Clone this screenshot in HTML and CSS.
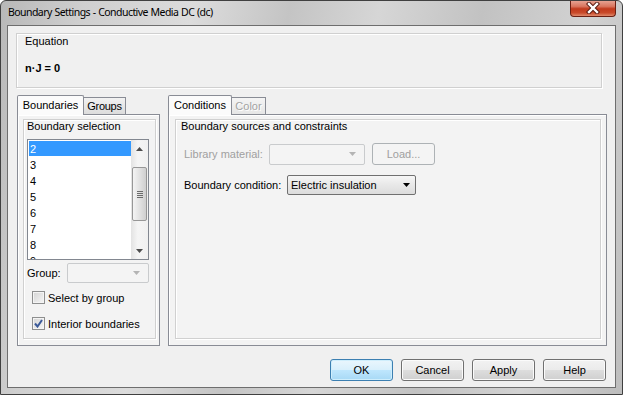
FILE: index.html
```html
<!DOCTYPE html>
<html lang="en">
<head>
    <meta charset="UTF-8">
    <title>Boundary Settings - Conductive Media DC (dc)</title>
    <link rel="stylesheet" href="styles.css">
</head>
<body>
    <div class="window">
        <div class="titlebar">
            <span class="title">Boundary Settings - Conductive Media DC (dc)</span>
            <div class="close">
                <svg width="14" height="12" viewBox="0 0 14 12">
                    <path d="M3 2 L11 10 M11 2 L3 10" stroke="#5a1a10" stroke-width="4.4" stroke-linecap="square"/>
                    <path d="M3 2 L11 10 M11 2 L3 10" stroke="#ffffff" stroke-width="2.4" stroke-linecap="square"/>
                </svg>
            </div>
        </div>

        <div class="client">
            <div class="group equation">
                <div class="group-title">Equation</div>
                <div class="formula">n·J = 0</div>
            </div>

            <div class="panes">
                <div class="tabpane pane-left">
                    <div class="tabstrip">
                        <span class="tab active tab-boundaries">Boundaries</span>
                        <span class="tab tab-groups">Groups</span>
                    </div>
                    <div class="tabbody">
                        <div class="group sel-group">
                            <div class="group-title">Boundary selection</div>

                            <div class="listbox">
                                <ul class="items">
                                    <li class="selected">2</li>
                                    <li>3</li>
                                    <li>4</li>
                                    <li>5</li>
                                    <li>6</li>
                                    <li>7</li>
                                    <li>8</li>
                                    <li>9</li>
                                </ul>
                                <div class="vscroll">
                                    <div class="sb-btn">
                                        <svg width="7" height="4" viewBox="0 0 7 4"><path d="M0 4 L3.5 0 L7 4 Z" fill="#4d4d4d"/></svg>
                                    </div>
                                    <div class="sb-thumb">
                                        <span></span><span></span><span></span><span></span>
                                    </div>
                                    <div class="sb-fill"></div>
                                    <div class="sb-btn">
                                        <svg width="7" height="4" viewBox="0 0 7 4"><path d="M0 0 L7 0 L3.5 4 Z" fill="#4d4d4d"/></svg>
                                    </div>
                                </div>
                            </div>

                            <div class="field-row group-row">
                                <span class="field-label">Group:</span>
                                <div class="combo disabled group-combo">
                                    <span class="combo-text"></span>
                                    <svg width="7" height="4" viewBox="0 0 7 4"><path d="M0 0 L7 0 L3.5 4 Z" fill="#b4b4b4"/></svg>
                                </div>
                            </div>

                            <label class="check">
                                <span class="box"></span>
                                Select by group
                            </label>
                            <label class="check">
                                <span class="box">
                                    <svg width="9" height="9" viewBox="0 0 9 9"><path d="M1 4.5 L3.5 7.5 L8 1" fill="none" stroke="#3b5a99" stroke-width="2"/></svg>
                                </span>
                                Interior boundaries
                            </label>
                        </div>
                    </div>
                </div>

                <div class="tabpane pane-right">
                    <div class="tabstrip">
                        <span class="tab active tab-conditions">Conditions</span>
                        <span class="tab disabled tab-color">Color</span>
                    </div>
                    <div class="tabbody">
                        <div class="group cond-group">
                            <div class="group-title">Boundary sources and constraints</div>

                            <div class="field-row lib-row">
                                <span class="field-label disabled-text">Library material:</span>
                                <div class="combo disabled lib-combo">
                                    <span class="combo-text"></span>
                                    <svg width="7" height="4" viewBox="0 0 7 4"><path d="M0 0 L7 0 L3.5 4 Z" fill="#b4b4b4"/></svg>
                                </div>
                                <button class="btn disabled load-btn">Load...</button>
                            </div>

                            <div class="field-row bc-row">
                                <span class="field-label">Boundary condition:</span>
                                <div class="combo bc-combo">
                                    <span class="combo-text">Electric insulation</span>
                                    <svg width="7" height="4" viewBox="0 0 7 4"><path d="M0 0 L7 0 L3.5 4 Z" fill="#000"/></svg>
                                </div>
                            </div>
                        </div>
                    </div>
                </div>
            </div>

            <div class="buttons">
                <button class="btn default">OK</button>
                <button class="btn">Cancel</button>
                <button class="btn">Apply</button>
                <button class="btn">Help</button>
            </div>
        </div>
    </div>
</body>
</html>
```

FILE: styles.css
```css
body
{
    margin: 0;
    font-family: "Liberation Sans", Arial, sans-serif;
    font-size: 11px;
    color: #000;
}

.window
{
    width: 623px;
    height: 395px;
    box-sizing: border-box;
    border: 1px solid #404040;
    border-radius: 6px 6px 0 0;
    background: linear-gradient(100deg, #b8b8b8 0%, #cfcfcf 12%, #dcdcdc 28%, #c4c4c4 42%, #d6d6d6 55%, #c2c2c2 70%, #d2d2d2 85%, #bdbdbd 100%);
    display: flex;
    flex-direction: column;
    overflow: hidden;
}

.titlebar
{
    height: 24px;
    flex-shrink: 0;
    display: flex;
    align-items: flex-start;
    padding-left: 7px;
}

.title
{
    font-family: "Noto Sans", "Open Sans", sans-serif;
    font-size: 10.5px;
    letter-spacing: -0.55px;
    word-spacing: 0.5px;
    margin-top: 4px;
    color: #000;
}

.close
{
    margin-left: auto;
    margin-right: 6px;
    margin-top: -1px;
    width: 46px;
    height: 17px;
    box-sizing: border-box;
    border: 1px solid #6b2013;
    border-top: none;
    border-radius: 0 0 4px 4px;
    background: linear-gradient(#e9a99a 0%, #d9765f 40%, #c13a1d 55%, #c94a2a 80%, #e08a6c 100%);
    display: flex;
    align-items: center;
    justify-content: center;
}

.client
{
    flex: 1;
    margin: 0 6px 6px;
    border: 1px solid #6e6e6e;
    background: #f0f0f0;
    padding: 7px 0 0 8px;
    display: flex;
    flex-direction: column;
}

/* group boxes */

.group
{
    box-sizing: border-box;
    border: 1px solid #d0d0d0;
    box-shadow: inset 1px 1px 0 #ffffff, 1px 1px 0 #ffffff;
}

.group-title
{
    line-height: 13px;
}

.equation
{
    width: 586px;
    height: 55px;
    padding: 1px 8px 0;
}

.formula
{
    margin-top: 14px;
    font-weight: bold;
    line-height: 13px;
}

/* tab panes */

.panes
{
    display: flex;
    gap: 8px;
    margin-top: 7px;
    margin-left: 1px;
    height: 251px;
}

.tabpane
{
    display: flex;
    flex-direction: column;
}

.pane-left
{
    width: 143px;
}

.pane-right
{
    width: 439px;
}

.tabstrip
{
    height: 19px;
    display: flex;
    align-items: flex-end;
    position: relative;
    z-index: 1;
}

.tab
{
    box-sizing: border-box;
    height: 17px;
    text-align: center;
    line-height: 16px;
    border: 1px solid #898c95;
    border-bottom: none;
    border-left: none;
    background: linear-gradient(#f2f2f2, #dcdcdc);
}

.tab.active
{
    height: 20px;
    margin-bottom: -1px;
    padding-top: 1px;
    border-left: 1px solid #898c95;
    border-radius: 2px 2px 0 0;
    background: #fbfbfb;
}

.tab.disabled
{
    color: #a3a3a3;
    text-shadow: 1px 1px 0 #ffffff;
    background: linear-gradient(#f4f4f4, #e6e6e6);
}

.tab-boundaries
{
    width: 67px;
}

.tab-groups
{
    width: 42px;
    letter-spacing: -0.3px;
}

.tab-conditions
{
    width: 64px;
}

.tab-color
{
    width: 34px;
}

.tabbody
{
    flex: 1;
    box-sizing: border-box;
    border: 1px solid #898c95;
    background: #f3f3f3;
    box-shadow: inset 1px 1px 0 #ffffff;
    padding: 4px 3px 6px 5px;
    display: flex;
}

.pane-right .tabbody
{
    padding: 4px 5px 6px 6px;
}

.sel-group,
.cond-group
{
    flex: 1;
    padding-left: 3px;
}

.cond-group
{
    padding-left: 5px;
}

/* list box */

.listbox
{
    margin-top: 6px;
    width: 122px;
    height: 121px;
    box-sizing: border-box;
    border: 1px solid #828790;
    background: #ffffff;
    display: flex;
    overflow: hidden;
}

.items
{
    flex: 1;
    list-style: none;
    margin: 0;
    padding: 1px 0 0 1px;
}

.items li
{
    height: 16px;
    line-height: 16px;
    padding-left: 1px;
}

.items li.selected
{
    background: #3399ff;
    color: #ffffff;
    height: 15px;
    margin-bottom: 1px;
}

.vscroll
{
    width: 17px;
    display: flex;
    flex-direction: column;
    background: linear-gradient(to right, #e3e3e3, #f5f5f5 40%, #f0f0f0);
}

.sb-btn
{
    height: 17px;
    display: flex;
    align-items: center;
    justify-content: center;
}

.sb-thumb
{
    margin: 10px 1px 0;
    height: 54px;
    box-sizing: border-box;
    border: 1px solid #979797;
    border-radius: 2px;
    background: linear-gradient(to right, #f4f4f4, #e2e2e2 50%, #cfcfcf);
    display: flex;
    flex-direction: column;
    align-items: center;
    justify-content: center;
    gap: 1px;
}

.sb-thumb span
{
    width: 6px;
    height: 1px;
    background: #6b6b6b;
}

.sb-fill
{
    flex: 1;
}

/* fields */

.field-row
{
    display: flex;
    align-items: center;
}

.group-row
{
    margin-top: 3px;
}

.group-row .field-label
{
    width: 40px;
}

.combo
{
    box-sizing: border-box;
    display: flex;
    align-items: center;
    border: 1px solid #707070;
    border-radius: 2px;
    background: linear-gradient(#f6f6f6, #e8e8e8 50%, #dcdcdc);
    padding: 0 8px 0 3px;
}

.combo-text
{
    flex: 1;
}

.combo.disabled
{
    border-color: #c9cbcd;
    background: #f4f4f4;
}

.group-combo
{
    width: 82px;
    height: 20px;
}

.disabled-text
{
    color: #a0a0a0;
}

.check
{
    display: flex;
    align-items: center;
    gap: 3px;
    margin-left: 5px;
    height: 13px;
}

.group-row + .check
{
    margin-top: 8px;
}

.check + .check
{
    margin-top: 13px;
}

.box
{
    width: 13px;
    height: 13px;
    box-sizing: border-box;
    border: 1px solid #8e8f8f;
    background: linear-gradient(135deg, #d4d4d4, #f6f6f6);
    box-shadow: inset 0 0 0 1px #f4f4f4;
    display: flex;
    align-items: center;
    justify-content: center;
}

.cond-group .group-title
{
    margin-bottom: 10px;
}

.lib-row,
.bc-row
{
    padding-left: 3px;
}

.lib-row .field-label
{
    width: 85px;
}

.lib-combo
{
    width: 96px;
    height: 21px;
}

.load-btn
{
    margin-left: 7px;
    width: 65px;
    height: 21px;
}

.bc-row
{
    margin-top: 10px;
}

.bc-row .field-label
{
    width: 103px;
}

.bc-combo
{
    width: 129px;
    height: 20px;
    padding-right: 5px;
}

/* buttons */

.buttons
{
    margin-top: 13px;
    margin-right: 9px;
    display: flex;
    justify-content: flex-end;
    gap: 8px;
}

.btn
{
    width: 63px;
    height: 22px;
    box-sizing: border-box;
    font-family: "Liberation Sans", Arial, sans-serif;
    font-size: 11px;
    color: #000;
    border: 1px solid #707070;
    border-radius: 3px;
    background: linear-gradient(#f2f2f2 0%, #ebebeb 48%, #dddddd 52%, #cfcfcf 100%);
    box-shadow: inset 0 0 0 1px #fbfbfb;
    padding: 0;
}

.btn.default
{
    border-color: #3c7fb1;
    background: linear-gradient(#eaf6fd 0%, #d9f0fc 48%, #bee6fd 52%, #a7d9f5 100%);
    box-shadow: inset 0 0 0 1px #cfeefc;
}

.btn.disabled
{
    color: #a0a0a0;
    border-color: #adb2b5;
    background: #f4f4f4;
    box-shadow: none;
}
```
